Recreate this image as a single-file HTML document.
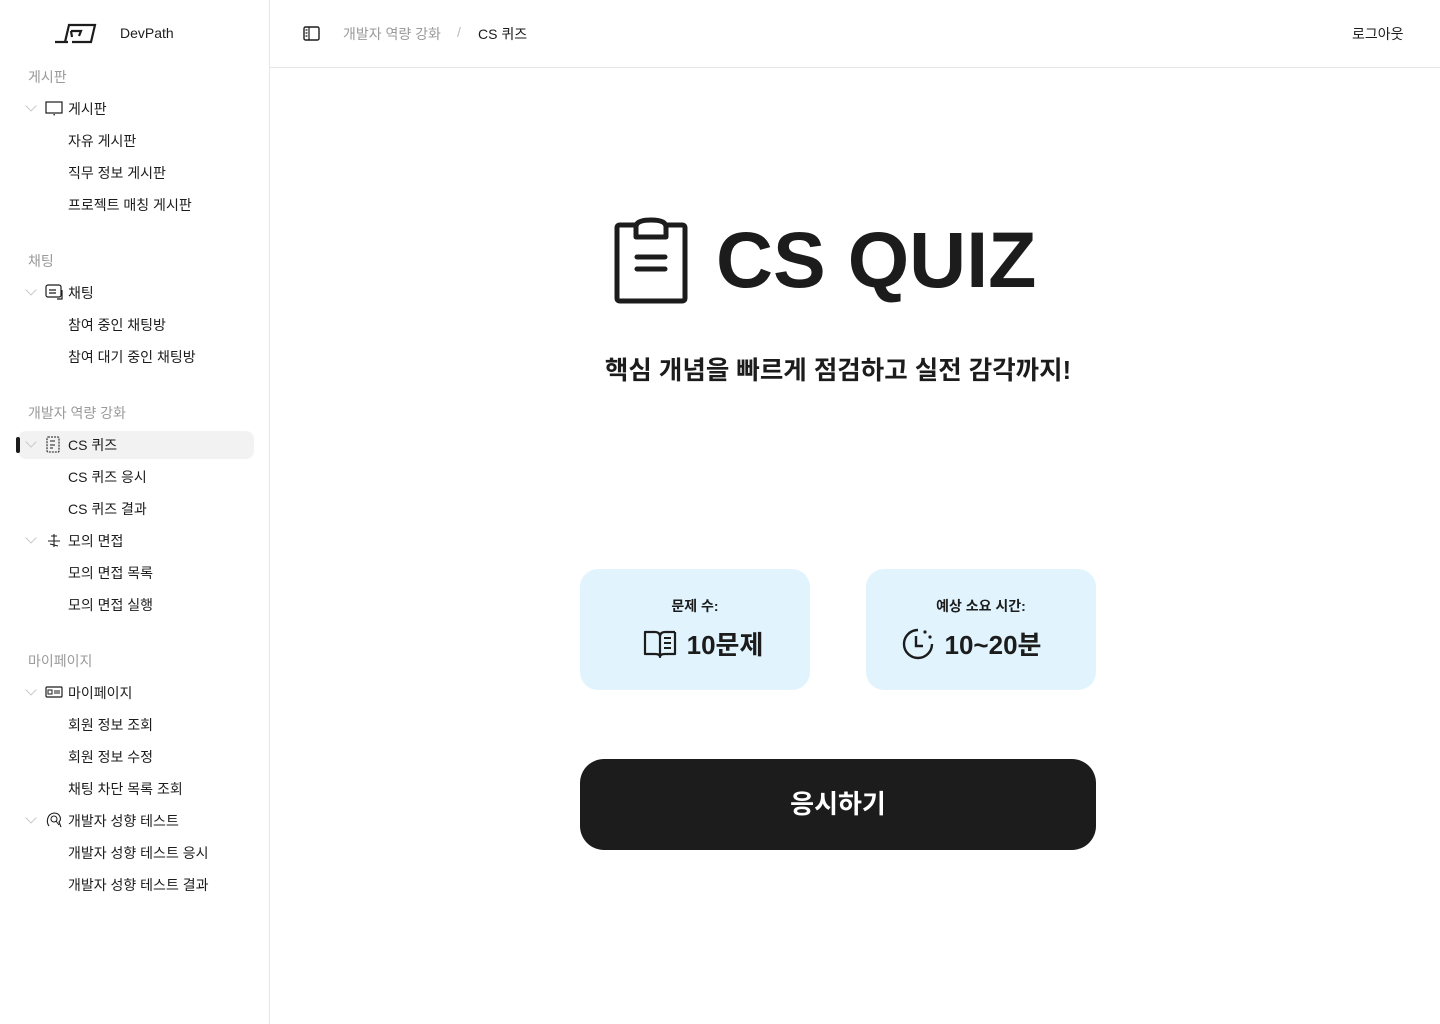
<!DOCTYPE html>
<html><head><meta charset="utf-8"><style>
*{margin:0;padding:0;box-sizing:border-box}
body{width:1440px;height:1024px;background:#fff;font-family:"Liberation Sans","Noto Sans CJK KR",sans-serif;color:#1c1c1c;position:relative;overflow:hidden}
.side{position:absolute;left:0;top:0;width:270px;height:1024px;border-right:1px solid #e6e6e6}
.abs{position:absolute;white-space:nowrap}
.sec{font-size:14px;color:#9a9a9a;left:28px}
.it{font-size:14px;color:#1c1c1c;left:68px}
.chev{left:27px;width:8px;height:8px;border-right:1px solid #c8c8c8;border-bottom:1px solid #c8c8c8;transform:rotate(45deg)}
.hdr{position:absolute;left:270px;top:0;right:0;height:68px;border-bottom:1px solid #e6e6e6}
.card{position:absolute;top:569px;width:230px;height:121px;background:#e1f4fe;border-radius:18px;text-align:center}
.card .l{font-size:14px;font-weight:bold;margin-top:27px}
.card .v{font-size:26px;font-weight:bold;margin-top:9px;display:flex;align-items:center;justify-content:center;gap:10px}
</style></head><body>
<div class="side">
<svg class="abs" style="left:54px;top:22px" width="44" height="22" viewBox="0 0 44 22"><path d="M1 20H14M11 20L15 3H41L37 20H18M17 9H27L25 14" fill="none" stroke="#1c1c1c" stroke-width="2.2"/><path d="M17 9L18 15" stroke="#1c1c1c" stroke-width="2.2"/></svg>
<div class="abs" style="left:120px;top:25px;font-size:14px">DevPath</div>

<div class="abs sec" style="top:67px">게시판</div>
<div class="abs chev" style="top:102px"></div>
<svg class="abs" style="left:45px;top:101px" width="18" height="15" viewBox="0 0 18 15"><rect x="1" y="1" width="16" height="11" fill="none" stroke="#1c1c1c" stroke-width="1.2"/><rect x="8.5" y="13" width="1.4" height="1.4" fill="#1c1c1c"/></svg>
<div class="abs it" style="top:99px">게시판</div>
<div class="abs it" style="top:131px">자유 게시판</div>
<div class="abs it" style="top:163px">직무 정보 게시판</div>
<div class="abs it" style="top:195px">프로젝트 매칭 게시판</div>

<div class="abs sec" style="top:251px">채팅</div>
<div class="abs chev" style="top:286px"></div>
<svg class="abs" style="left:45px;top:284px" width="19" height="16" viewBox="0 0 19 16"><rect x="1" y="1" width="15" height="12" rx="2" fill="none" stroke="#1c1c1c" stroke-width="1.2"/><path d="M4 6H11M4 9H11M17 6V15H12" fill="none" stroke="#1c1c1c" stroke-width="1.2"/></svg>
<div class="abs it" style="top:283px">채팅</div>
<div class="abs it" style="top:315px">참여 중인 채팅방</div>
<div class="abs it" style="top:347px">참여 대기 중인 채팅방</div>

<div class="abs sec" style="top:403px">개발자 역량 강화</div>
<div class="abs" style="left:18px;top:431px;width:236px;height:28px;background:#f2f2f2;border-radius:8px"></div>
<div class="abs" style="left:16px;top:437px;width:4px;height:16px;background:#1c1c1c;border-radius:2px"></div>
<div class="abs chev" style="top:438px"></div>
<svg class="abs" style="left:46px;top:436px" width="16" height="17" viewBox="0 0 16 17"><rect x="1" y="1" width="12" height="15" rx="1" fill="none" stroke="#1c1c1c" stroke-width="1.1" stroke-dasharray="2 1"/><path d="M4 5H9M4 9H9M4 12H7" stroke="#1c1c1c"/></svg>
<div class="abs it" style="top:435px">CS 퀴즈</div>
<div class="abs it" style="top:467px">CS 퀴즈 응시</div>
<div class="abs it" style="top:499px">CS 퀴즈 결과</div>
<div class="abs chev" style="top:534px"></div>
<svg class="abs" style="left:46px;top:532px" width="16" height="16" viewBox="0 0 16 16"><path d="M2 9H14M8 2V15M5 4H11M4 12L12 14" stroke="#1c1c1c" stroke-width="1.1" fill="none"/></svg>
<div class="abs it" style="top:531px">모의 면접</div>
<div class="abs it" style="top:563px">모의 면접 목록</div>
<div class="abs it" style="top:595px">모의 면접 실행</div>

<div class="abs sec" style="top:651px">마이페이지</div>
<div class="abs chev" style="top:686px"></div>
<svg class="abs" style="left:45px;top:686px" width="18" height="12" viewBox="0 0 18 12"><rect x="1" y="1" width="16" height="10" rx="1" fill="none" stroke="#1c1c1c" stroke-width="1.2"/><path d="M3 4H7V8H3ZM9 5H15M9 7H15" stroke="#1c1c1c" fill="none"/></svg>
<div class="abs it" style="top:683px">마이페이지</div>
<div class="abs it" style="top:715px">회원 정보 조회</div>
<div class="abs it" style="top:747px">회원 정보 수정</div>
<div class="abs it" style="top:779px">채팅 차단 목록 조회</div>
<div class="abs chev" style="top:814px"></div>
<svg class="abs" style="left:45px;top:811px" width="18" height="18" viewBox="0 0 18 18"><path d="M4 15C1 11 2 3 9 2C15 2 17 8 14 11L16 16" fill="none" stroke="#1c1c1c" stroke-width="1.1"/><circle cx="9" cy="8" r="3" fill="none" stroke="#1c1c1c"/><path d="M11 10L14 14" stroke="#1c1c1c"/></svg>
<div class="abs it" style="top:811px">개발자 성향 테스트</div>
<div class="abs it" style="top:843px">개발자 성향 테스트 응시</div>
<div class="abs it" style="top:875px">개발자 성향 테스트 결과</div>
</div>

<div class="hdr">
<svg class="abs" style="left:33px;top:26px" width="17" height="15" viewBox="0 0 17 15"><rect x="1" y="1" width="15" height="13" rx="1.5" fill="none" stroke="#1c1c1c" stroke-width="1.4"/><path d="M6 1V14M2.5 4H4.5M2.5 7H4.5M2.5 10H4.5" stroke="#1c1c1c" stroke-width="1.2"/></svg>
<div class="abs" style="left:73px;top:24px;font-size:14px;color:#9a9a9a">개발자 역량 강화</div>
<div class="abs" style="left:187px;top:24px;font-size:14px;color:#bbb">/</div>
<div class="abs" style="left:208px;top:24px;font-size:14px">CS 퀴즈</div>
<div class="abs" style="left:1082px;top:24px;font-size:14px">로그아웃</div>
</div>

<svg class="abs" style="left:614px;top:217px" width="74" height="87" viewBox="0 0 74 87"><path d="M22 8H6Q3 8 3 11V81Q3 84 6 84H68Q71 84 71 81V11Q71 8 68 8H52" fill="none" stroke="#1c1c1c" stroke-width="5"/><path d="M22 20V10Q22 3 37 3Q52 3 52 10V20Z" fill="none" stroke="#1c1c1c" stroke-width="5" stroke-linejoin="round"/><path d="M23 40H51M23 52H51" stroke="#1c1c1c" stroke-width="5" stroke-linecap="round"/></svg>
<div class="abs" style="left:716px;top:214px;font-size:79px;font-weight:bold">CS QUIZ</div>
<div class="abs" style="left:570px;width:536px;text-align:center;top:350px;font-size:25.5px;font-weight:bold">핵심 개념을 빠르게 점검하고 실전 감각까지!</div>

<div class="card" style="left:580px"><div class="l">문제 수:</div><div class="v" style="padding-left:16px"><svg width="34" height="30" viewBox="0 0 34 30"><path d="M2 3H12Q17 3 17 8V28Q17 25 12 25H2ZM32 3H22Q17 3 17 8M17 28Q17 25 22 25H32V3" fill="none" stroke="#1c1c1c" stroke-width="2.2" stroke-linejoin="round"/><path d="M21 9H28M21 14H28M21 19H28" stroke="#1c1c1c" stroke-width="2"/></svg>10문제</div></div>
<div class="card" style="left:866px"><div class="l">예상 소요 시간:</div><div class="v" style="padding-right:20px"><svg width="34" height="34" viewBox="0 0 34 34"><path d="M17 3A14 14 0 1 0 31 17" fill="none" stroke="#1c1c1c" stroke-width="2.4"/><path d="M15 9V19H22" fill="none" stroke="#1c1c1c" stroke-width="2.4"/><circle cx="24" cy="5" r="1.6" fill="#1c1c1c"/><circle cx="29" cy="10" r="1.6" fill="#1c1c1c"/></svg>10~20분</div></div>

<div class="abs" style="left:580px;top:759px;width:516px;height:91px;background:#1c1c1c;border-radius:24px;color:#fff;font-size:26px;font-weight:bold;text-align:center;line-height:91px">응시하기</div>
</body></html>
